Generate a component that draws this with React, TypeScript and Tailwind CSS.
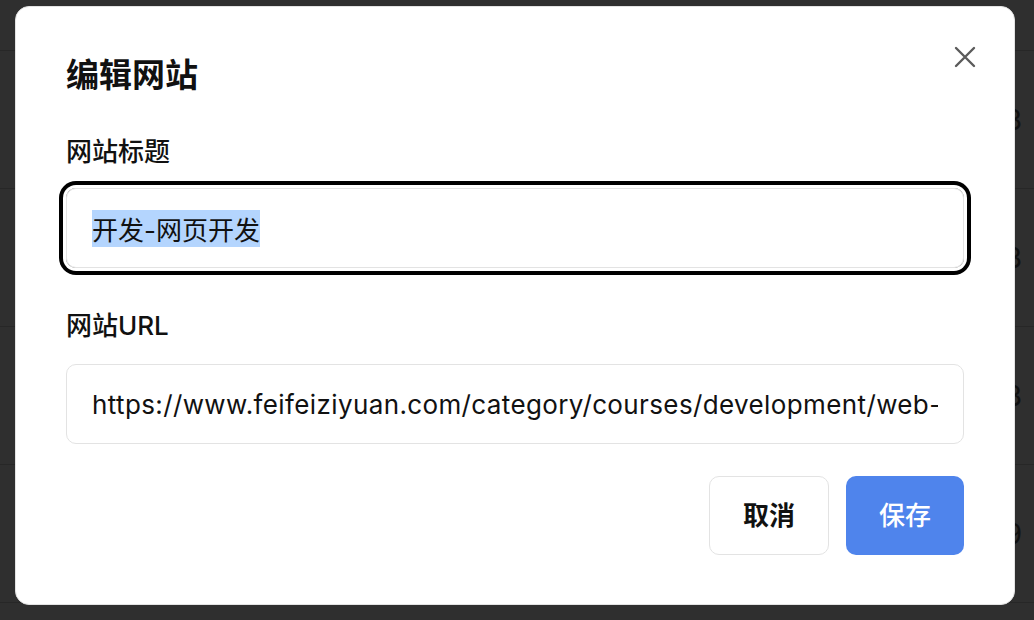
import React, { useEffect, useRef, useState } from 'react';

const rows = ['3', '3', '3', '9'];

function CloseIcon() {
  return (
    <svg width="22" height="22" viewBox="0 0 22 22" fill="none" stroke="#5b5b5b" strokeWidth="2.4" strokeLinecap="round">
      <path d="M2 2 L20 20 M20 2 L2 20" />
    </svg>
  );
}

export default function App() {
  const [title, setTitle] = useState('开发-网页开发');
  const [url, setUrl] = useState('https://www.feifeiziyuan.com/category/courses/development/web-development/');
  const titleRef = useRef<HTMLInputElement>(null);

  useEffect(() => {
    // focus and select the title, like the dialog does when it opens
    titleRef.current?.focus();
    titleRef.current?.select();
  }, []);

  return (
    <div
      className="relative w-[1034px] h-[620px] overflow-hidden bg-[#2f2f2f] text-[#111]"
      style={{ fontFamily: '"Inter", "Noto Sans CJK SC", sans-serif' }}
    >
      {/* page content behind the overlay */}
      <div className="flex flex-col">
        <div className="h-[51px] border-b border-[#272727]" />
        {rows.map((n, i) => (
          <div key={i} className="h-[138px] flex items-center justify-end pr-[12px] border-b border-[#272727] text-[28px] text-[#111]">
            {n}
          </div>
        ))}
      </div>

      {/* dialog */}
      <div className="absolute left-[15px] top-[6px] w-[1000px] h-[599px] bg-white border border-[#e3e3e3] rounded-[14px] px-[50px] pt-[48px]">
        <button className="absolute right-[37px] top-[38px] p-[1px]">
          <CloseIcon />
        </button>

        <h2 className="h-[40px] leading-[40px] text-[33px] font-semibold text-[#111]">编辑网站</h2>

        <label className="block mt-[39px] h-[36px] leading-[36px] text-[26px] font-medium text-[#111]">网站标题</label>
        <input
          ref={titleRef}
          value={title}
          onChange={(e) => setTitle(e.target.value)}
          className="block mt-[18px] w-full h-[80px] px-[25px] text-[26px] text-[#111] border border-[#e3e3e3] rounded-[10px] outline-none ring-[4px] ring-black ring-offset-[3px] selection:bg-[#b4d5fe] selection:text-[#111]"
        />

        <label className="block mt-[40px] h-[36px] leading-[36px] text-[26px] font-medium text-[#111]">网站URL</label>
        <input
          value={url}
          onChange={(e) => setUrl(e.target.value)}
          className="block mt-[20px] w-full h-[80px] px-[25px] text-[26px] tracking-[0.38px] text-[#111] border border-[#e3e3e3] rounded-[10px] outline-none"
        />

        <div className="flex justify-end gap-[17px] mt-[32px]">
          <button className="w-[120px] h-[79px] rounded-[10px] border border-[#e3e3e3] bg-white text-[26px] font-semibold text-[#111]">
            取消
          </button>
          <button className="w-[118px] h-[79px] rounded-[10px] bg-[#4f84ec] text-[26px] font-medium text-white">
            保存
          </button>
        </div>
      </div>
    </div>
  );
}
